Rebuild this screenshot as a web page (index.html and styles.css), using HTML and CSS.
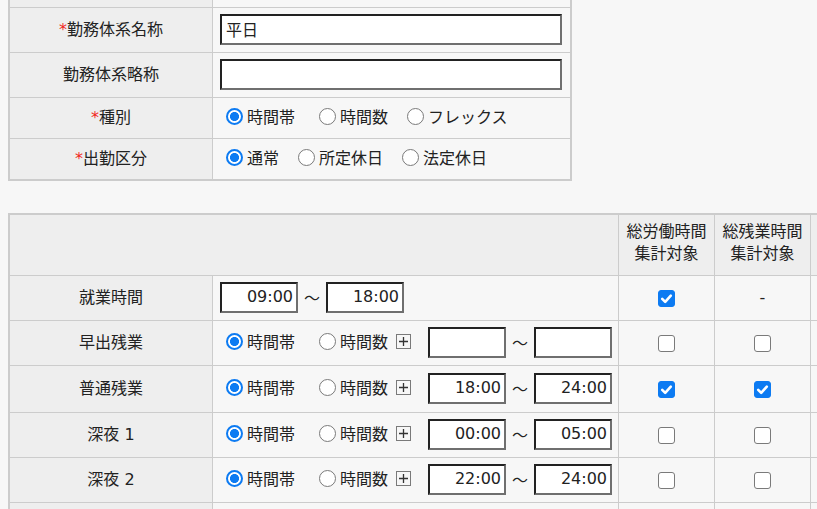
FILE: index.html
```html
<!DOCTYPE html>
<html lang="ja">
<head>
<meta charset="utf-8">
<title>勤務体系</title>
<link rel="stylesheet" href="styles.css">
</head>
<body>
<div class="page">
  <table class="form basic">
    <colgroup><col class="c-label"><col class="c-value"></colgroup>
    <tbody>
      <tr class="r-hidden"><th></th><td></td></tr>
      <tr class="r-input">
        <th><span class="req">*</span>勤務体系名称</th>
        <td><input class="txt" type="text" value="平日"></td>
      </tr>
      <tr class="r-input">
        <th>勤務体系略称</th>
        <td><input class="txt" type="text" value=""></td>
      </tr>
      <tr class="r-radio">
        <th><span class="req">*</span>種別</th>
        <td>
          <div class="opts">
            <label class="opt band"><input type="radio" name="kind" checked>時間帯</label>
            <label class="opt"><input type="radio" name="kind">時間数</label>
            <label class="opt"><input type="radio" name="kind">フレックス</label>
          </div>
        </td>
      </tr>
      <tr class="r-radio last">
        <th><span class="req">*</span>出勤区分</th>
        <td>
          <div class="opts">
            <label class="opt"><input type="radio" name="att" checked>通常</label>
            <label class="opt"><input type="radio" name="att">所定休日</label>
            <label class="opt"><input type="radio" name="att">法定休日</label>
          </div>
        </td>
      </tr>
    </tbody>
  </table>

  <table class="form detail">
    <colgroup><col class="c-label"><col class="c-main"><col class="c-chk"><col class="c-chk"><col class="c-chk"></colgroup>
    <thead>
      <tr class="r-head">
        <th colspan="2"></th>
        <th class="hd">総労働時間<br>集計対象</th>
        <th class="hd">総残業時間<br>集計対象</th>
        <th class="hd"></th>
      </tr>
    </thead>
    <tbody>
      <tr class="r-row">
        <th>就業時間</th>
        <td>
          <div class="line">
            <input class="time" type="text" value="09:00"><span class="tilde">〜</span><input class="time" type="text" value="18:00">
          </div>
        </td>
        <td class="chk"><label class="cb"><input type="checkbox" checked><svg class="tick" viewBox="0 0 17 17"><path d="M4.2 8.8L7.2 11.8L12.8 5.6" fill="none" stroke="#fff" stroke-width="2.6" stroke-linecap="round" stroke-linejoin="round"/></svg></label></td>
        <td class="chk">-</td>
        <td class="chk"></td>
      </tr>
      <tr class="r-row">
        <th>早出残業</th>
        <td>
          <div class="line">
            <label class="opt band"><input type="radio" name="early" checked>時間帯</label>
            <label class="opt count"><input type="radio" name="early">時間数</label>
            <svg class="plus" width="15" height="15" viewBox="0 0 15 15"><rect x="0.5" y="0.5" width="14" height="14" fill="none" stroke="#7a7a7a"/><path d="M3 7.5H12M7.5 3V12" stroke="#333" stroke-width="1.3"/></svg>
            <input class="time" type="text" value=""><span class="tilde">〜</span><input class="time" type="text" value="">
          </div>
        </td>
        <td class="chk"><label class="cb"><input type="checkbox"><svg class="tick" viewBox="0 0 17 17"><path d="M4.2 8.8L7.2 11.8L12.8 5.6" fill="none" stroke="#fff" stroke-width="2.6" stroke-linecap="round" stroke-linejoin="round"/></svg></label></td>
        <td class="chk"><label class="cb"><input type="checkbox"><svg class="tick" viewBox="0 0 17 17"><path d="M4.2 8.8L7.2 11.8L12.8 5.6" fill="none" stroke="#fff" stroke-width="2.6" stroke-linecap="round" stroke-linejoin="round"/></svg></label></td>
        <td class="chk"></td>
      </tr>
      <tr class="r-row tall">
        <th>普通残業</th>
        <td>
          <div class="line">
            <label class="opt band"><input type="radio" name="normal" checked>時間帯</label>
            <label class="opt count"><input type="radio" name="normal">時間数</label>
            <svg class="plus" width="15" height="15" viewBox="0 0 15 15"><rect x="0.5" y="0.5" width="14" height="14" fill="none" stroke="#7a7a7a"/><path d="M3 7.5H12M7.5 3V12" stroke="#333" stroke-width="1.3"/></svg>
            <input class="time" type="text" value="18:00"><span class="tilde">〜</span><input class="time" type="text" value="24:00">
          </div>
        </td>
        <td class="chk"><label class="cb"><input type="checkbox" checked><svg class="tick" viewBox="0 0 17 17"><path d="M4.2 8.8L7.2 11.8L12.8 5.6" fill="none" stroke="#fff" stroke-width="2.6" stroke-linecap="round" stroke-linejoin="round"/></svg></label></td>
        <td class="chk"><label class="cb"><input type="checkbox" checked><svg class="tick" viewBox="0 0 17 17"><path d="M4.2 8.8L7.2 11.8L12.8 5.6" fill="none" stroke="#fff" stroke-width="2.6" stroke-linecap="round" stroke-linejoin="round"/></svg></label></td>
        <td class="chk"></td>
      </tr>
      <tr class="r-row">
        <th>深夜 1</th>
        <td>
          <div class="line">
            <label class="opt band"><input type="radio" name="night1" checked>時間帯</label>
            <label class="opt count"><input type="radio" name="night1">時間数</label>
            <svg class="plus" width="15" height="15" viewBox="0 0 15 15"><rect x="0.5" y="0.5" width="14" height="14" fill="none" stroke="#7a7a7a"/><path d="M3 7.5H12M7.5 3V12" stroke="#333" stroke-width="1.3"/></svg>
            <input class="time" type="text" value="00:00"><span class="tilde">〜</span><input class="time" type="text" value="05:00">
          </div>
        </td>
        <td class="chk"><label class="cb"><input type="checkbox"><svg class="tick" viewBox="0 0 17 17"><path d="M4.2 8.8L7.2 11.8L12.8 5.6" fill="none" stroke="#fff" stroke-width="2.6" stroke-linecap="round" stroke-linejoin="round"/></svg></label></td>
        <td class="chk"><label class="cb"><input type="checkbox"><svg class="tick" viewBox="0 0 17 17"><path d="M4.2 8.8L7.2 11.8L12.8 5.6" fill="none" stroke="#fff" stroke-width="2.6" stroke-linecap="round" stroke-linejoin="round"/></svg></label></td>
        <td class="chk"></td>
      </tr>
      <tr class="r-row">
        <th>深夜 2</th>
        <td>
          <div class="line">
            <label class="opt band"><input type="radio" name="night2" checked>時間帯</label>
            <label class="opt count"><input type="radio" name="night2">時間数</label>
            <svg class="plus" width="15" height="15" viewBox="0 0 15 15"><rect x="0.5" y="0.5" width="14" height="14" fill="none" stroke="#7a7a7a"/><path d="M3 7.5H12M7.5 3V12" stroke="#333" stroke-width="1.3"/></svg>
            <input class="time" type="text" value="22:00"><span class="tilde">〜</span><input class="time" type="text" value="24:00">
          </div>
        </td>
        <td class="chk"><label class="cb"><input type="checkbox"><svg class="tick" viewBox="0 0 17 17"><path d="M4.2 8.8L7.2 11.8L12.8 5.6" fill="none" stroke="#fff" stroke-width="2.6" stroke-linecap="round" stroke-linejoin="round"/></svg></label></td>
        <td class="chk"><label class="cb"><input type="checkbox"><svg class="tick" viewBox="0 0 17 17"><path d="M4.2 8.8L7.2 11.8L12.8 5.6" fill="none" stroke="#fff" stroke-width="2.6" stroke-linecap="round" stroke-linejoin="round"/></svg></label></td>
        <td class="chk"></td>
      </tr>
      <tr class="r-row">
        <th></th>
        <td></td>
        <td class="chk"></td>
        <td class="chk"></td>
        <td class="chk"></td>
      </tr>
    </tbody>
  </table>
</div>
</body>
</html>
```

FILE: styles.css
```css
html, body {
  margin: 0;
  overflow: hidden;
  background: #f7f7f7;
}

body {
  font-family: "DejaVu Sans", "Noto Sans CJK JP", sans-serif;
  font-size: 16px;
  color: #222;
}

.page {
  padding: 0 8px;
  margin-top: -39px;
}

table.form {
  border-collapse: separate;
  border-spacing: 0;
  border: 2px solid #ccc;
  table-layout: fixed;
  box-sizing: border-box;
}

table.basic { width: 564px; }
table.detail { width: 901px; margin-top: 32px; }

col.c-label { width: 203px; }
col.c-main { width: 406px; }
col.c-chk { width: 96px; }

table.form th,
table.form td {
  box-sizing: border-box;
  padding: 0 7px 1px;
  border-right: 1px solid #ccc;
  border-bottom: 1px solid #ccc;
  vertical-align: middle;
  white-space: nowrap;
}

table.form th {
  background: #eee;
  font-weight: normal;
  text-align: center;
  padding-bottom: 4px;
}

table.form td { background: #f7f7f7; }

table.form tr > :last-child { border-right: none; }
table.form tbody tr:last-child > * { border-bottom: none; }

.r-hidden > * { height: 45px; }
.r-input > * { height: 45px; }
.r-radio > * { height: 41px; }
.r-radio.last > * { height: 40px; }
.r-head > * { height: 61px; }
.r-row > * { height: 45px; }
.r-row.tall > * { height: 47px; }

table.detail thead th { background: #eee; }

.hd {
  line-height: 22px;
  padding: 0 0 3px;
}

.req { color: #f2281c; }

input.txt,
input.time {
  box-sizing: border-box;
  height: 31px;
  margin: 0;
  border: 2px solid;
  border-color: #222 #6f6f6f #6f6f6f #222;
  background: #fff;
  font: inherit;
  color: #222;
  outline: none;
  padding-top: 0;
  padding-bottom: 2px;
}

input.txt {
  width: 342px;
  padding-left: 4px;
  padding-right: 4px;
  text-align: left;
}

input.time {
  width: 78px;
  padding-left: 3px;
  padding-right: 3px;
  text-align: right;
}

.opts,
.line {
  display: flex;
  align-items: center;
}

.opts { margin-bottom: 3px; }

.opt {
  display: inline-flex;
  align-items: center;
  margin-right: 13px;
}

.line .opt,
.line .plus { margin-bottom: 3px; }

.opt.band { margin-right: 18px; }
.opt.count { margin-right: 8px; }

.opt input[type="radio"] {
  appearance: none;
  -webkit-appearance: none;
  box-sizing: border-box;
  flex: none;
  width: 17px;
  height: 17px;
  margin: 0 4px 0 6px;
  border: 1px solid #7a7a7a;
  border-radius: 50%;
  background: #fff;
}

.opt input[type="radio"]:checked {
  border: 2px solid #0d7bf2;
  background: radial-gradient(circle, #0d7bf2 0 4.2px, #fff 4.8px);
}

.plus {
  display: block;
  flex: none;
  margin-right: 17px;
}

.tilde {
  width: 16px;
  margin: 0 6px 2px;
  text-align: center;
  font-family: "Noto Sans CJK JP", sans-serif;
}

td.chk {
  text-align: center;
  padding: 0 0 2px;
}

.cb {
  position: relative;
  display: inline-block;
  width: 17px;
  height: 17px;
  vertical-align: middle;
}

.cb input {
  appearance: none;
  -webkit-appearance: none;
  box-sizing: border-box;
  display: block;
  width: 17px;
  height: 17px;
  margin: 0;
  border: 1px solid #7a7a7a;
  border-radius: 3px;
  background: #fff;
}

.cb input:checked {
  border-color: #0d7bf2;
  background: #0d7bf2;
}

.cb .tick {
  position: absolute;
  left: 0;
  top: 0;
  width: 17px;
  height: 17px;
  display: none;
  pointer-events: none;
}

.cb input:checked + .tick { display: block; }
```
